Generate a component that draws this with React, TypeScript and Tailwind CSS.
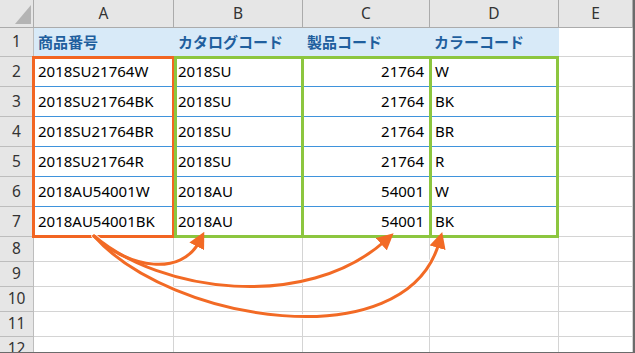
const rows = [
  ['2018SU21764W', '2018SU', '21764', 'W'],
  ['2018SU21764BK', '2018SU', '21764', 'BK'],
  ['2018SU21764BR', '2018SU', '21764', 'BR'],
  ['2018SU21764R', '2018SU', '21764', 'R'],
  ['2018AU54001W', '2018AU', '54001', 'W'],
  ['2018AU54001BK', '2018AU', '54001', 'BK'],
]

const heads = ['商品番号', 'カタログコード', '製品コード', 'カラーコード']
const letters = ['A', 'B', 'C', 'D', 'E']

const font = { fontFamily: '"Noto Sans", "Noto Sans CJK JP", sans-serif' }

function RowHead({ n }: { n: number }) {
  return (
    <div className="flex items-center justify-center border-r border-b border-[#bdbdbd] bg-[#e6e6e6] text-[15.5px] text-[#333]">
      {n}
    </div>
  )
}

export default function App() {
  return (
    <div
      className="relative h-[353px] w-[635px] overflow-hidden border-r-2 border-b border-[#6b6b6b] bg-white text-black"
      style={font}
    >
      <div className="grid grid-cols-[34px_140px_129px_127px_129px_1fr] grid-rows-[28px_29px_repeat(6,30px)_repeat(5,25px)]">
        {/* column headers */}
        <div className="relative border-r border-b border-[#ababab] bg-[#e6e6e6]">
          <svg className="absolute left-0 top-0" width="34" height="28">
            <polygon points="31,5 31,24 15,24" fill="#b4b4b4" />
          </svg>
        </div>
        {letters.map((l) => (
          <div
            key={l}
            className="flex items-center justify-center border-r border-b border-[#ababab] bg-[#e6e6e6] text-[15.5px] text-[#333]"
          >
            {l}
          </div>
        ))}

        {/* row 1 */}
        <RowHead n={1} />
        {heads.map((h) => (
          <div
            key={h}
            className="flex items-center border-b border-[#d4d4d4] bg-[#d8eaf8] pl-1 text-[15px] font-bold text-[#1f5f9e]"
          >
            {h}
          </div>
        ))}
        <div className="border-r border-b border-[#d4d4d4]" />

        {/* rows 2-7 */}
        {rows.map((r, i) => (
          <div key={i} className="contents">
            <RowHead n={i + 2} />
            <div className="flex items-center border-r border-b border-[#d4d4d4] border-b-[#3f93dc] pl-1 text-[15px]">{r[0]}</div>
            <div className="flex items-center border-r border-b border-[#d4d4d4] border-b-[#3f93dc] pl-1 text-[15px]">{r[1]}</div>
            <div className="flex items-center justify-end border-r border-b border-[#d4d4d4] border-b-[#3f93dc] pr-[5px] text-[15px]">{r[2]}</div>
            <div className="flex items-center border-r border-b border-[#d4d4d4] border-b-[#3f93dc] pl-[5px] text-[15px]">{r[3]}</div>
            <div className="border-r border-b border-[#d4d4d4]" />
          </div>
        ))}

        {/* rows 8-12 */}
        {[8, 9, 10, 11, 12].map((n) => (
          <div key={n} className="contents">
            <RowHead n={n} />
            {letters.map((l) => (
              <div key={l} className="border-r border-b border-[#d4d4d4]" />
            ))}
          </div>
        ))}
      </div>

      {/* range outlines */}
      <div className="absolute left-[32px] top-[56px] h-[182px] w-[143px] border-[3px] border-[#f26522]" />
      <div className="absolute left-[174px] top-[56px] h-[182px] w-[130px] border-[3px] border-[#8cc63f]" />
      <div className="absolute left-[301px] top-[56px] h-[182px] w-[131px] border-[3px] border-[#8cc63f]" />
      <div className="absolute left-[429px] top-[56px] h-[182px] w-[130px] border-[3px] border-[#8cc63f]" />

      {/* arrows */}
      <svg className="absolute left-0 top-0" width="635" height="353">
        <defs>
          <marker id="head" viewBox="0 0 10 10" refX="3" refY="5" markerWidth="5.5" markerHeight="5.5" orient="auto" markerUnits="strokeWidth">
            <path d="M0,0 L10,5 L0,10 z" fill="#f26a25" />
          </marker>
        </defs>
        <g fill="none" stroke="#fff" strokeWidth="5" strokeLinecap="round" opacity="0.8">
          <path d="M94 236 C130 270, 182 275, 199 242" />
          <path d="M94 236 C160 292, 305 312, 385 241" />
          <path d="M94 236 C170 322, 405 360, 439 243" />
        </g>
        <g fill="none" stroke="#f26a25" strokeWidth="3" strokeLinecap="round">
          <path d="M94 236 C130 270, 182 275, 199 242" markerEnd="url(#head)" />
          <path d="M94 236 C160 292, 305 312, 385 241" markerEnd="url(#head)" />
          <path d="M94 236 C170 322, 405 360, 439 243" markerEnd="url(#head)" />
        </g>
      </svg>
    </div>
  )
}
